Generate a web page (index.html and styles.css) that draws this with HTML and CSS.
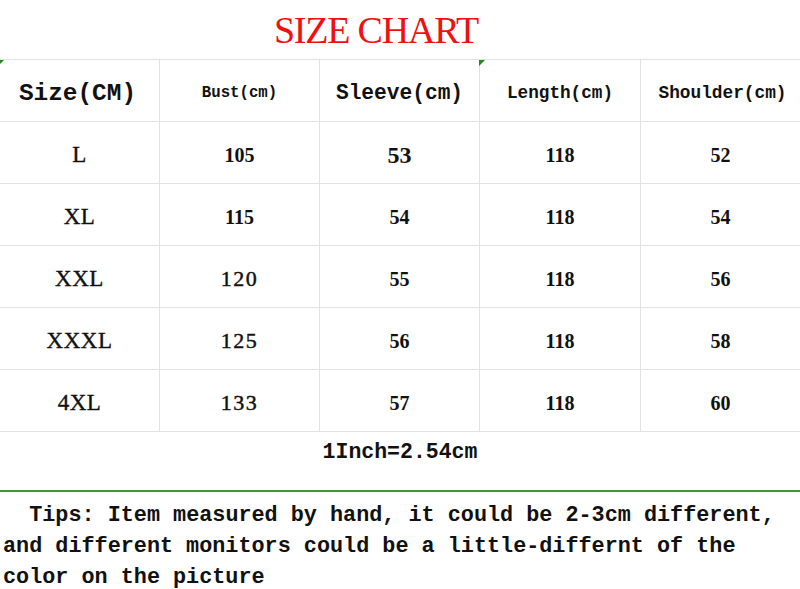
FILE: index.html
```html
<!DOCTYPE html>
<html>
<head>
<meta charset="utf-8">
<link rel="stylesheet" href="styles.css">
</head>
<body>
<div class="page">
  <h1 class="title">SIZE CHART</h1>
  <div class="chart">
    <div class="cell head mark-edge"><span class="h-size">Size(CM)</span></div>
    <div class="cell head"><span class="h-bust">Bust(cm)</span></div>
    <div class="cell head"><span class="h-sleeve">Sleeve(cm)</span></div>
    <div class="cell head mark"><span class="h-len">Length(cm)</span></div>
    <div class="cell head last"><span class="h-sh">Shoulder(cm)</span></div>

    <div class="cell size">L</div>
    <div class="cell num">105</div>
    <div class="cell num big">53</div>
    <div class="cell num">118</div>
    <div class="cell num last">52</div>

    <div class="cell size">XL</div>
    <div class="cell num">115</div>
    <div class="cell num">54</div>
    <div class="cell num">118</div>
    <div class="cell num last">54</div>

    <div class="cell size">XXL</div>
    <div class="cell num wide">120</div>
    <div class="cell num">55</div>
    <div class="cell num">118</div>
    <div class="cell num last">56</div>

    <div class="cell size">XXXL</div>
    <div class="cell num wide">125</div>
    <div class="cell num">56</div>
    <div class="cell num">118</div>
    <div class="cell num last">58</div>

    <div class="cell size">4XL</div>
    <div class="cell num wide">133</div>
    <div class="cell num">57</div>
    <div class="cell num">118</div>
    <div class="cell num last">60</div>
  </div>
  <div class="inch">1Inch=2.54cm</div>
  <p class="tips">  Tips: Item measured by hand, it could be 2-3cm different, and different monitors could be a little-differnt of the color on the picture</p>
</div>
</body>
</html>
```

FILE: styles.css
```css
html, body {
  margin: 0;
  padding: 0;
  background: #ffffff;
}

.page {
  width: 800px;
  height: 589px;
  overflow: hidden;
  color: #111111;
}

.title {
  margin: 0;
  height: 59px;
  box-sizing: border-box;
  padding: 10px 48px 0 0;
  text-align: center;
  font-family: "Liberation Serif", serif;
  font-weight: normal;
  font-size: 38px;
  line-height: 40px;
  letter-spacing: -1.2px;
  color: #f01010;
}

.chart {
  display: grid;
  grid-template-columns: 160px 160px 160px 161px 1fr;
  grid-auto-rows: 62px;
  border-top: 1px solid #e2e2e2;
}

.cell {
  position: relative;
  display: flex;
  align-items: center;
  justify-content: center;
  border-right: 1px solid #e2e2e2;
  border-bottom: 1px solid #e2e2e2;
  padding-top: 5px;
  box-sizing: border-box;
  color: #111111;
}

.cell.last {
  border-right: none;
}

.head {
  font-family: "Liberation Mono", monospace;
  font-weight: bold;
  padding-top: 5px;
}

.h-size { font-size: 24.4px; padding-right: 4px; }
.h-bust { font-size: 15.7px; }
.h-sleeve { font-size: 21.2px; }
.h-len { font-size: 17.7px; }
.h-sh { font-size: 17.8px; padding-left: 4px; }

.mark::before,
.mark-edge::before {
  content: "";
  position: absolute;
  top: 0;
  left: -1px;
  width: 0;
  height: 0;
  border-top: 6px solid #1d8a1d;
  border-right: 6px solid transparent;
}

.mark-edge::before {
  left: 0;
  border-top-width: 4px;
  border-right-width: 4px;
}

.size {
  font-family: "Liberation Serif", serif;
  font-size: 23px;
  letter-spacing: 0.5px;
  -webkit-text-stroke: 0.35px #111;
}

.num {
  font-family: "Liberation Serif", serif;
  font-weight: bold;
  font-size: 20px;
}

.num.big {
  font-size: 24px;
}

.num.wide {
  font-weight: normal;
  font-size: 22px;
  letter-spacing: 1.5px;
  -webkit-text-stroke: 0.45px #111;
}

.inch {
  height: 60px;
  box-sizing: border-box;
  padding-top: 8px;
  text-align: center;
  font-family: "Liberation Mono", monospace;
  font-weight: bold;
  font-size: 21.5px;
  line-height: 24px;
  border-bottom: 2px solid #3f9a33;
}

.tips {
  margin: 0;
  padding: 8px 0 0 3px;
  white-space: pre-wrap;
  font-family: "Liberation Mono", monospace;
  font-weight: bold;
  font-size: 21.8px;
  line-height: 31px;
  color: #111111;
}
```
